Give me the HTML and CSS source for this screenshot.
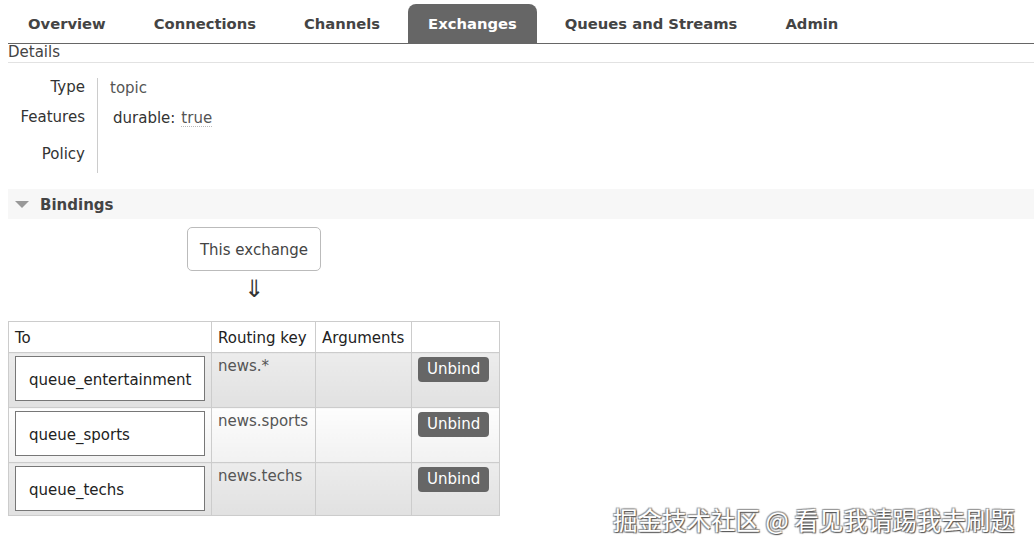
FILE: index.html
```html
<!DOCTYPE html>
<html>
<head>
<meta charset="utf-8">
<link rel="stylesheet" href="styles.css">
</head>
<body>
<div class="page">
  <ul class="tabs">
    <li class="tab">Overview</li>
    <li class="tab">Connections</li>
    <li class="tab">Channels</li>
    <li class="tab active">Exchanges</li>
    <li class="tab">Queues and Streams</li>
    <li class="tab">Admin</li>
  </ul>
  <div class="section-title">Details</div>
  <div class="details">
    <div class="labels">
      <div class="lbl r1">Type</div>
      <div class="lbl r2">Features</div>
      <div class="lbl r3">Policy</div>
    </div>
    <div class="values">
      <div class="val r1"><span class="topic">topic</span></div>
      <div class="val r2"><span class="feat">durable:</span><span class="true">true</span></div>
      <div class="val r3"></div>
    </div>
  </div>
  <div class="bindings-head"><span class="tri"></span><span>Bindings</span></div>
  <div class="bindings">
    <div class="this-ex">This exchange</div>
    <div class="arrow">⇓</div>
    <table class="tbl">
      <colgroup>
        <col class="c1"><col class="c2"><col class="c3"><col class="c4">
      </colgroup>
      <thead>
        <tr><th>To</th><th>Routing key</th><th>Arguments</th><th></th></tr>
      </thead>
      <tbody>
        <tr class="alt1">
          <td><div class="qbox">queue_entertainment</div></td>
          <td class="rk">news.*</td>
          <td></td>
          <td class="act"><span class="btn">Unbind</span></td>
        </tr>
        <tr class="alt0">
          <td><div class="qbox">queue_sports</div></td>
          <td class="rk">news.sports</td>
          <td></td>
          <td class="act"><span class="btn">Unbind</span></td>
        </tr>
        <tr class="alt1 last">
          <td><div class="qbox">queue_techs</div></td>
          <td class="rk">news.techs</td>
          <td></td>
          <td class="act"><span class="btn">Unbind</span></td>
        </tr>
      </tbody>
    </table>
  </div>
  <div class="watermark">掘金技术社区 @ 看见我请踢我去刷题</div>
</div>
</body>
</html>
```
FILE: styles.css
```css
html, body {
  margin: 0;
  padding: 0;
  background: #fff;
}
body {
  font-family: "DejaVu Sans", Verdana, sans-serif;
  font-size: 15px;
  color: #444;
  width: 1034px;
  height: 551px;
  overflow: hidden;
}
.page {
  position: relative;
  padding: 4px 0 0 8px;
  height: 547px;
}
.tabs {
  list-style: none;
  margin: 0;
  padding: 0;
  display: flex;
  gap: 8px;
  height: 39px;
  border-bottom: 1px solid #666;
}
.tab {
  padding: 1px 20px 0 20px;
  font-size: 14.75px;
  font-weight: bold;
  color: #444;
  line-height: 38px;
  white-space: nowrap;
  border-radius: 8px 8px 0 0;
}
.tab.active {
  background: #666;
  color: #fff;
}
.section-title {
  line-height: 17px;
  height: 18px;
  border-bottom: 1px solid #e2e2e2;
  color: #444;
}
.details {
  display: flex;
  margin-top: 15px;
}
.labels {
  width: 77px;
  padding-right: 12px;
  border-right: 1px solid #ccc;
  text-align: right;
  color: #333;
}
.lbl, .val {
  line-height: 17px;
}
.lbl {
  padding-top: 1px;
  box-sizing: border-box;
}
.r1 { height: 30px; }
.r2 { height: 37px; }
.r3 { height: 28px; }
.values {
  padding-left: 12px;
  color: #555;
}
.topic {
  display: inline-block;
  padding-top: 2px;
}
.feat {
  color: #333;
  padding-left: 3px;
}
.true {
  display: inline-block;
  margin-left: 6px;
  padding-top: 2px;
  line-height: 16px;
  border-bottom: 1px dotted #bbb;
}
.bindings-head {
  margin-top: 16px;
  height: 30px;
  background: #f7f7f7;
  display: flex;
  align-items: center;
  font-weight: bold;
  color: #444;
}
.bindings-head span:last-child {
  padding-top: 2px;
}
.tri {
  width: 0;
  height: 0;
  margin: 1px 11px 0 7px;
  border-left: 7px solid transparent;
  border-right: 7px solid transparent;
  border-top: 7px solid #999;
}
.bindings {
  width: 492px;
  display: flex;
  flex-direction: column;
  align-items: center;
}
.this-ex {
  margin-top: 8px;
  width: 132px;
  height: 41px;
  border: 1px solid #bbb;
  border-radius: 5px;
  display: flex;
  align-items: center;
  justify-content: center;
  padding-top: 1px;
  box-sizing: content-box;
  color: #444;
}
.arrow {
  font-size: 24px;
  line-height: 26px;
  margin-top: 5px;
  height: 45px;
  color: #333;
}
.tbl {
  width: 492px;
  border-collapse: collapse;
  table-layout: fixed;
}
.c1 { width: 203px; }
.c2 { width: 104px; }
.c3 { width: 96px; }
.c4 { width: 88px; }
.tbl th, .tbl td {
  border: 1px solid #ccc;
  vertical-align: top;
  text-align: left;
}
.tbl th {
  font-weight: normal;
  color: #222;
  height: 30px;
  padding: 3px 6px 0 6px;
  line-height: 27px;
  background: #fff;
  box-sizing: border-box;
}
.tbl td {
  padding: 3px 6px 6px 6px;
  color: #555;
}
.last td {
  padding-bottom: 4px;
}
.alt1 td {
  background: linear-gradient(#ececec, #e1e1e1);
}
.alt0 td {
  background: linear-gradient(#fdfdfd, #f1f1f1);
}
.qbox {
  box-sizing: border-box;
  width: 190px;
  height: 45px;
  border: 1px solid #777;
  background: #fff;
  color: #222;
  padding-left: 13px;
  display: flex;
  align-items: center;
  padding-top: 2px;
}
.tbl td.rk {
  padding-top: 5px;
  line-height: 17px;
}
.tbl td.act {
  padding-top: 4px;
}
.btn {
  display: inline-block;
  background: #666;
  color: #fff;
  border-radius: 4px;
  height: 25px;
  line-height: 25px;
  padding: 0 9px;
}
.watermark {
  position: absolute;
  left: 613px;
  top: 504px;
  font-family: "Noto Sans CJK SC", sans-serif;
  font-size: 24.5px;
  line-height: 32px;
  color: #fff;
  white-space: nowrap;
  text-shadow: 1px 1px 1px #555, -1px -1px 1px #999, 1px -1px 1px #999, -1px 1px 1px #999;
}
```
